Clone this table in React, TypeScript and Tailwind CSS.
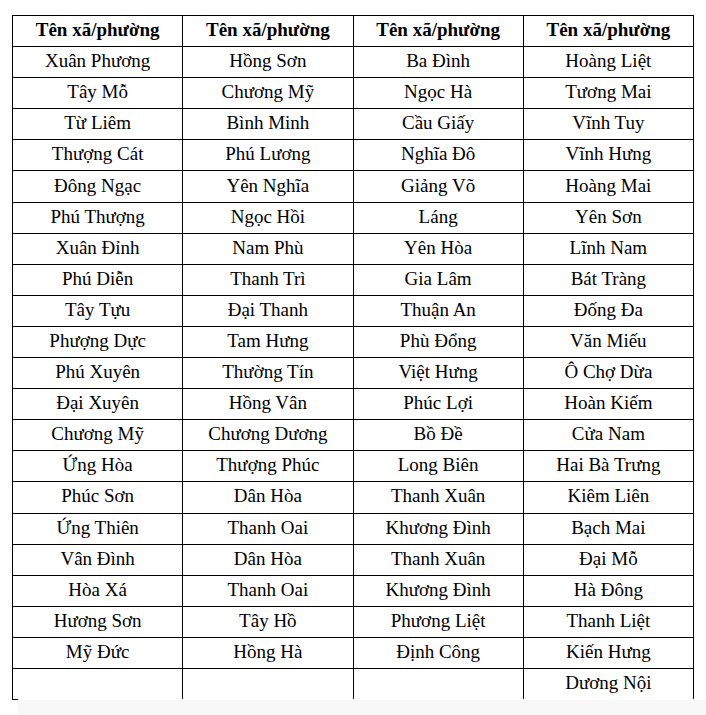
const columns: string[][] = [
  [
    "Xuân Phương", "Tây Mỗ", "Từ Liêm", "Thượng Cát", "Đông Ngạc", "Phú Thượng", "Xuân Đỉnh",
    "Phú Diễn", "Tây Tựu", "Phượng Dực", "Phú Xuyên", "Đại Xuyên", "Chương Mỹ", "Ứng Hòa",
    "Phúc Sơn", "Ứng Thiên", "Vân Đình", "Hòa Xá", "Hương Sơn", "Mỹ Đức", "",
  ],
  [
    "Hồng Sơn", "Chương Mỹ", "Bình Minh", "Phú Lương", "Yên Nghĩa", "Ngọc Hồi", "Nam Phù",
    "Thanh Trì", "Đại Thanh", "Tam Hưng", "Thường Tín", "Hồng Vân", "Chương Dương", "Thượng Phúc",
    "Dân Hòa", "Thanh Oai", "Dân Hòa", "Thanh Oai", "Tây Hồ", "Hồng Hà", "",
  ],
  [
    "Ba Đình", "Ngọc Hà", "Cầu Giấy", "Nghĩa Đô", "Giảng Võ", "Láng", "Yên Hòa",
    "Gia Lâm", "Thuận An", "Phù Đổng", "Việt Hưng", "Phúc Lợi", "Bồ Đề", "Long Biên",
    "Thanh Xuân", "Khương Đình", "Thanh Xuân", "Khương Đình", "Phương Liệt", "Định Công", "",
  ],
  [
    "Hoàng Liệt", "Tương Mai", "Vĩnh Tuy", "Vĩnh Hưng", "Hoàng Mai", "Yên Sơn", "Lĩnh Nam",
    "Bát Tràng", "Đống Đa", "Văn Miếu", "Ô Chợ Dừa", "Hoàn Kiếm", "Cửa Nam", "Hai Bà Trưng",
    "Kiêm Liên", "Bạch Mai", "Đại Mỗ", "Hà Đông", "Thanh Liệt", "Kiến Hưng", "Dương Nội",
  ],
]

const rows = columns[0].map((_, i) => columns.map((col) => col[i]))

export default function App() {
  return (
    <div
      className="w-[706px] h-[715px] bg-white text-black overflow-hidden flex flex-col"
      style={{ fontFamily: '"Liberation Serif", "Times New Roman", serif' }}
    >
      <div className="h-[699px] shrink-0 pt-[15px] pl-[12px] overflow-hidden">
        <div className="w-[682px] border-l border-t border-black">
          <div className="grid grid-cols-4 h-[31.1px]">
            {columns.map((_, i) => (
              <div
                key={i}
                className="border-r border-b border-black flex items-center justify-center pb-[3px] text-[19px] font-bold leading-none"
              >
                Tên xã/phường
              </div>
            ))}
          </div>
          {rows.map((row, r) => (
            <div key={r} className="grid grid-cols-4 h-[31.1px]">
              {row.map((name, c) => (
                <div
                  key={c}
                  className="border-r border-b border-black flex items-center justify-center pb-[3px] text-[19px] leading-none"
                >
                  {name}
                </div>
              ))}
            </div>
          ))}
        </div>
      </div>
      <div className="flex-1 flex">
        <div className="w-[18px] bg-white">
          <div className="ml-[12px] w-[6px] h-px bg-black" />
        </div>
        <div className="flex-1 bg-[#f8f8f8] mt-px" />
      </div>
    </div>
  )
}
